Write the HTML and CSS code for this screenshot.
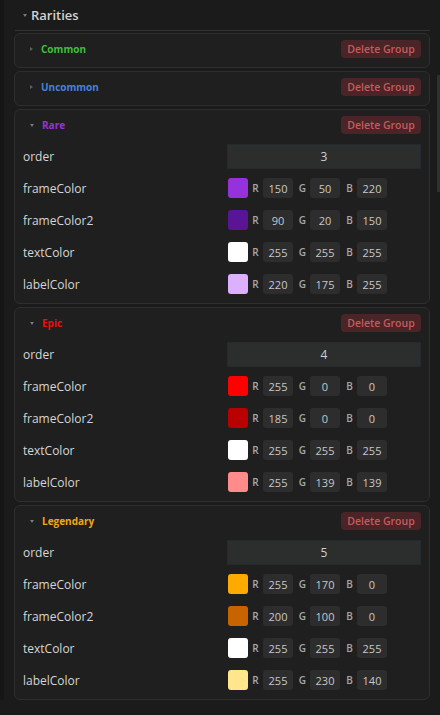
FILE: index.html
```html
<!DOCTYPE html>
<html lang="en">
<head>
    <meta charset="UTF-8">
    <meta name="viewport" content="width=device-width, initial-scale=1.0">
    <title>Rarities</title>
    <link rel="stylesheet" href="styles.css">
</head>
<body>
    <div class="panel">
        <div class="panel-head">
            <span class="caret open"></span>
            <span class="panel-title">Rarities</span>
        </div>

        <!-- Common -->
        <div class="group">
            <div class="group-head">
                <span class="caret"></span>
                <span class="group-name common">Common</span>
                <button class="btn-delete">Delete Group</button>
            </div>
        </div>

        <!-- Uncommon -->
        <div class="group">
            <div class="group-head">
                <span class="caret"></span>
                <span class="group-name uncommon">Uncommon</span>
                <button class="btn-delete">Delete Group</button>
            </div>
        </div>

        <!-- Rare -->
        <div class="group">
            <div class="group-head">
                <span class="caret open"></span>
                <span class="group-name rare">Rare</span>
                <button class="btn-delete">Delete Group</button>
            </div>
            <div class="field">
                <span class="field-label">order</span>
                <div class="num-input">3</div>
            </div>
            <div class="field">
                <span class="field-label">frameColor</span>
                <div class="color">
                    <span class="swatch" style="background: rgb(150,50,220)"></span>
                    <span class="ch">R</span><span class="ch-box">150</span>
                    <span class="ch">G</span><span class="ch-box">50</span>
                    <span class="ch">B</span><span class="ch-box">220</span>
                </div>
            </div>
            <div class="field">
                <span class="field-label">frameColor2</span>
                <div class="color">
                    <span class="swatch" style="background: rgb(90,20,150)"></span>
                    <span class="ch">R</span><span class="ch-box">90</span>
                    <span class="ch">G</span><span class="ch-box">20</span>
                    <span class="ch">B</span><span class="ch-box">150</span>
                </div>
            </div>
            <div class="field">
                <span class="field-label">textColor</span>
                <div class="color">
                    <span class="swatch" style="background: rgb(255,255,255)"></span>
                    <span class="ch">R</span><span class="ch-box">255</span>
                    <span class="ch">G</span><span class="ch-box">255</span>
                    <span class="ch">B</span><span class="ch-box">255</span>
                </div>
            </div>
            <div class="field">
                <span class="field-label">labelColor</span>
                <div class="color">
                    <span class="swatch" style="background: rgb(220,175,255)"></span>
                    <span class="ch">R</span><span class="ch-box">220</span>
                    <span class="ch">G</span><span class="ch-box">175</span>
                    <span class="ch">B</span><span class="ch-box">255</span>
                </div>
            </div>
        </div>

        <!-- Epic -->
        <div class="group">
            <div class="group-head">
                <span class="caret open"></span>
                <span class="group-name epic">Epic</span>
                <button class="btn-delete">Delete Group</button>
            </div>
            <div class="field">
                <span class="field-label">order</span>
                <div class="num-input">4</div>
            </div>
            <div class="field">
                <span class="field-label">frameColor</span>
                <div class="color">
                    <span class="swatch" style="background: rgb(255,0,0)"></span>
                    <span class="ch">R</span><span class="ch-box">255</span>
                    <span class="ch">G</span><span class="ch-box">0</span>
                    <span class="ch">B</span><span class="ch-box">0</span>
                </div>
            </div>
            <div class="field">
                <span class="field-label">frameColor2</span>
                <div class="color">
                    <span class="swatch" style="background: rgb(185,0,0)"></span>
                    <span class="ch">R</span><span class="ch-box">185</span>
                    <span class="ch">G</span><span class="ch-box">0</span>
                    <span class="ch">B</span><span class="ch-box">0</span>
                </div>
            </div>
            <div class="field">
                <span class="field-label">textColor</span>
                <div class="color">
                    <span class="swatch" style="background: rgb(255,255,255)"></span>
                    <span class="ch">R</span><span class="ch-box">255</span>
                    <span class="ch">G</span><span class="ch-box">255</span>
                    <span class="ch">B</span><span class="ch-box">255</span>
                </div>
            </div>
            <div class="field">
                <span class="field-label">labelColor</span>
                <div class="color">
                    <span class="swatch" style="background: rgb(255,139,139)"></span>
                    <span class="ch">R</span><span class="ch-box">255</span>
                    <span class="ch">G</span><span class="ch-box">139</span>
                    <span class="ch">B</span><span class="ch-box">139</span>
                </div>
            </div>
        </div>

        <!-- Legendary -->
        <div class="group">
            <div class="group-head">
                <span class="caret open"></span>
                <span class="group-name legendary">Legendary</span>
                <button class="btn-delete">Delete Group</button>
            </div>
            <div class="field">
                <span class="field-label">order</span>
                <div class="num-input">5</div>
            </div>
            <div class="field">
                <span class="field-label">frameColor</span>
                <div class="color">
                    <span class="swatch" style="background: rgb(255,170,0)"></span>
                    <span class="ch">R</span><span class="ch-box">255</span>
                    <span class="ch">G</span><span class="ch-box">170</span>
                    <span class="ch">B</span><span class="ch-box">0</span>
                </div>
            </div>
            <div class="field">
                <span class="field-label">frameColor2</span>
                <div class="color">
                    <span class="swatch" style="background: rgb(200,100,0)"></span>
                    <span class="ch">R</span><span class="ch-box">200</span>
                    <span class="ch">G</span><span class="ch-box">100</span>
                    <span class="ch">B</span><span class="ch-box">0</span>
                </div>
            </div>
            <div class="field">
                <span class="field-label">textColor</span>
                <div class="color">
                    <span class="swatch" style="background: rgb(255,255,255)"></span>
                    <span class="ch">R</span><span class="ch-box">255</span>
                    <span class="ch">G</span><span class="ch-box">255</span>
                    <span class="ch">B</span><span class="ch-box">255</span>
                </div>
            </div>
            <div class="field">
                <span class="field-label">labelColor</span>
                <div class="color">
                    <span class="swatch" style="background: rgb(255,230,140)"></span>
                    <span class="ch">R</span><span class="ch-box">255</span>
                    <span class="ch">G</span><span class="ch-box">230</span>
                    <span class="ch">B</span><span class="ch-box">140</span>
                </div>
            </div>
        </div>
    </div>

    <!-- scrollbar thumb -->
    <div class="scroll-thumb"></div>
</body>
</html>
```

FILE: styles.css
```css
html, body {
    height: 100%;
}

body {
    margin: 0;
    background: #1b1b1b;
    font-family: "Open Sans", Arial, sans-serif;
    color: #d4d4d4;
    overflow: hidden;
    position: relative;
}

/* Panel wrapper */
.panel {
    border-left: 4px solid #161616;
    padding: 0 10px 0 10px;
}

.panel-head {
    height: 30px;
    display: flex;
    align-items: center;
    padding-left: 8px;
    border-bottom: 1px solid #333;
    margin: 0 0 2px 1px;
}

.panel-title {
    font-size: 13px;
    font-weight: 600;
    color: #d2d2d2;
    margin-left: 4px;
}

/* Little triangles */
.caret {
    display: inline-block;
    width: 0;
    height: 0;
    border-top: 2.5px solid transparent;
    border-bottom: 2.5px solid transparent;
    border-left: 3px solid #5e5e5e;
}

.caret.open {
    border-left: 2.5px solid transparent;
    border-right: 2.5px solid transparent;
    border-top: 3px solid #7a7a7a;
    border-bottom: 0;
}

/* Rarity groups */
.group {
    background: #1f1f1f;
    border: 1px solid #2e2e2e;
    border-radius: 6px;
    padding-bottom: 3px;
    margin-bottom: 3px;
}

.group-head {
    height: 30px;
    display: flex;
    align-items: center;
    padding: 0 8px 0 15px;
}

.group-name {
    font-size: 10px;
    font-weight: 700;
    margin-left: 8px;
}

.common { color: #3fbe3f; }
.uncommon { color: #4a80da; }
.rare { color: #9632dc; }
.epic { color: #ea1010; }
.legendary { color: #efa812; }

.btn-delete {
    margin-left: auto;
    background: #4a2426;
    color: #c85a5e;
    border: 0;
    border-radius: 4px;
    height: 18px;
    width: 80px;
    padding: 0;
    font-family: inherit;
    font-size: 10.5px;
    font-weight: 600;
}

/* Property rows */
.field {
    height: 32px;
    display: grid;
    grid-template-columns: 1fr 194px;
    align-items: center;
    padding: 0 8px;
}

.field-label {
    font-size: 12px;
    color: #d6d6d6;
}

.num-input {
    height: 23px;
    background: #2c2d2d;
    border: 1px solid #232b31;
    display: flex;
    align-items: center;
    justify-content: center;
    font-size: 12px;
    color: #cfcfcf;
}

.color {
    display: flex;
    align-items: center;
    padding-left: 1px;
}

.swatch {
    width: 20px;
    height: 20px;
    border-radius: 3px;
}

.ch {
    width: 15px;
    text-align: center;
    font-size: 10px;
    font-weight: 600;
    color: #a8a8a8;
}

.ch-box {
    width: 30px;
    height: 20px;
    background: #2d2d2d;
    border-radius: 3px;
    display: flex;
    align-items: center;
    justify-content: center;
    font-size: 11px;
    color: #c8c8c8;
    margin-right: 2px;
}

.scroll-thumb {
    position: absolute;
    right: 0;
    top: 75px;
    width: 3px;
    height: 117px;
    background: #303030;
}
```
